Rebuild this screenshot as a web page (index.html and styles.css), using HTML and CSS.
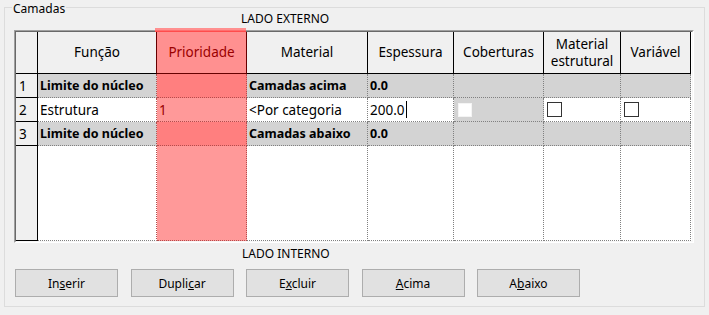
FILE: index.html
```html
<!DOCTYPE html>
<html lang="pt">
<head>
  <meta charset="UTF-8">
  <title>Camadas</title>
  <link rel="stylesheet" href="styles.css">
</head>
<body>
  <fieldset class="group">
    <legend>Camadas</legend>
    <div class="side side-top">LADO EXTERNO</div>

    <div class="grid">
      <div class="grid-in">
        <div class="cells">
          <div class="hd"></div>
          <div class="hd pre">Função</div>
          <div class="hd sel">Prioridade</div>
          <div class="hd">Material</div>
          <div class="hd">Espessura</div>
          <div class="hd">Coberturas</div>
          <div class="hd">Material<br>estrutural</div>
          <div class="hd">Variável</div>

          <div class="rh">1</div>
          <div class="c core pre">Limite do núcleo</div>
          <div class="c core sel"></div>
          <div class="c core">Camadas acima</div>
          <div class="c core">0.0</div>
          <div class="c core"></div>
          <div class="c core"></div>
          <div class="c core"></div>

          <div class="rh">2</div>
          <div class="c pre">Estrutura</div>
          <div class="c sel">1</div>
          <div class="c">&lt;Por categoria</div>
          <div class="c">200.0<span class="caret"></span></div>
          <div class="c off"><span class="check check-off"></span></div>
          <div class="c"><span class="check"></span></div>
          <div class="c"><span class="check"></span></div>

          <div class="rh">3</div>
          <div class="c core pre">Limite do núcleo</div>
          <div class="c core sel"></div>
          <div class="c core">Camadas abaixo</div>
          <div class="c core">0.0</div>
          <div class="c core"></div>
          <div class="c core"></div>
          <div class="c core"></div>

          <div class="rh"></div>
          <div class="c pre"></div>
          <div class="c sel"></div>
          <div class="c"></div>
          <div class="c"></div>
          <div class="c"></div>
          <div class="c"></div>
          <div class="c"></div>
        </div>
      </div>
      <!-- topo da coluna selecionada, por cima da borda -->
      <div class="sel-cap"></div>
    </div>

    <div class="side side-bottom">LADO INTERNO</div>

    <div class="buttons">
      <button class="btn">In<u>s</u>erir</button>
      <button class="btn">Dupli<u>c</u>ar</button>
      <button class="btn">E<u>x</u>cluir</button>
      <button class="btn"><u>A</u>cima</button>
      <button class="btn">A<u>b</u>aixo</button>
    </div>
  </fieldset>
</body>
</html>
```

FILE: styles.css
```css
* {
  box-sizing: border-box;
}
body {
  margin: 0;
  background: #f0f0f0;
  font-family: 'Noto Sans', 'Liberation Sans', Arial, sans-serif;
  font-size: 12px;
  color: #000;
}
.group {
  margin: 0 4px;
  padding: 0 9px 9px;
  border: 1px solid #dcdcdc;
  min-width: 0;
}
.group legend {
  font-size: 12px;
  line-height: 13px;
  padding: 2px 1px 0;
  margin-left: -2px;
}
.side {
  line-height: 12px;
  white-space: nowrap;
}
.side-top {
  padding-left: 227px;
  margin-top: -2px;
  margin-bottom: 5px;
}
.side-bottom {
  padding-left: 228px;
  margin-top: 5px;
}

/* grade */
.grid {
  position: relative;
  width: 680px;
  border: 1px solid;
  border-color: #a0a0a0 #ffffff #ffffff #a0a0a0;
  font-size: 13.5px;
}
.grid-in {
  border: 1px solid;
  border-color: #696969 #f7f7f7 #f7f7f7 #696969;
  background: #fff;
}
.cells {
  display: grid;
  grid-template-columns: 22px 119px 90px 121px 86px 90px 77px 70px;
  grid-template-rows: 42px 24px 24px 24px 95px;
}
.hd {
  display: flex;
  align-items: center;
  justify-content: center;
  text-align: center;
  line-height: 17px;
  background: #f0f0f0;
  border-right: 1px solid #000;
  border-bottom: 1px solid #000;
}
.rh {
  display: flex;
  align-items: center;
  padding-left: 3px;
  background: #f0f0f0;
  border-right: 1px solid #000;
  border-bottom: 1px solid #000;
}
.c {
  display: flex;
  align-items: center;
  padding: 0 2px;
  overflow: hidden;
  white-space: nowrap;
  border-right: 1px dotted #808080;
  border-bottom: 1px dotted #808080;
}
.core {
  background: #d3d3d3;
  font-weight: bold;
  font-size: 12.5px;
}
.off {
  background: #d3d3d3;
}

/* coluna Prioridade selecionada */
.hd.pre {
  border-right-color: #660000;
}
.c.pre {
  border-right-color: #b34d4d;
}
.sel {
  color: #9a0000;
  background: #ff9999;
  border-bottom-color: #b34d4d;
  border-right-color: #b34d4d;
}
.hd.sel {
  background: #ff9090;
  border-right-color: #660000;
  border-bottom-color: #660000;
}
.core.sel {
  background: #ff7f7f;
}
.sel-cap {
  position: absolute;
  left: 140px;
  top: -3px;
  width: 91px;
  height: 4px;
  background: linear-gradient(#ff9090 0 2px, #ff6e6e 2px 3px, #ff4c4c 3px 4px);
}

.caret {
  display: inline-block;
  width: 1px;
  height: 17px;
  margin-left: 1px;
  background: #000;
}
.check {
  width: 15px;
  height: 15px;
  margin-left: 1px;
  border: 1px solid #333;
  background: #fff;
}
.check-off {
  width: 14px;
  height: 14px;
  margin-left: 2px;
  border-color: #f4f4f4;
}

/* botoes */
.buttons {
  display: flex;
  gap: 12.5px;
  margin-top: 9px;
  padding-left: 1px;
}
.btn {
  width: 103px;
  height: 28px;
  padding: 0;
  font-family: inherit;
  font-size: 12px;
  color: #000;
  background: #e1e1e1;
  border: 1px solid #adadad;
}
```
